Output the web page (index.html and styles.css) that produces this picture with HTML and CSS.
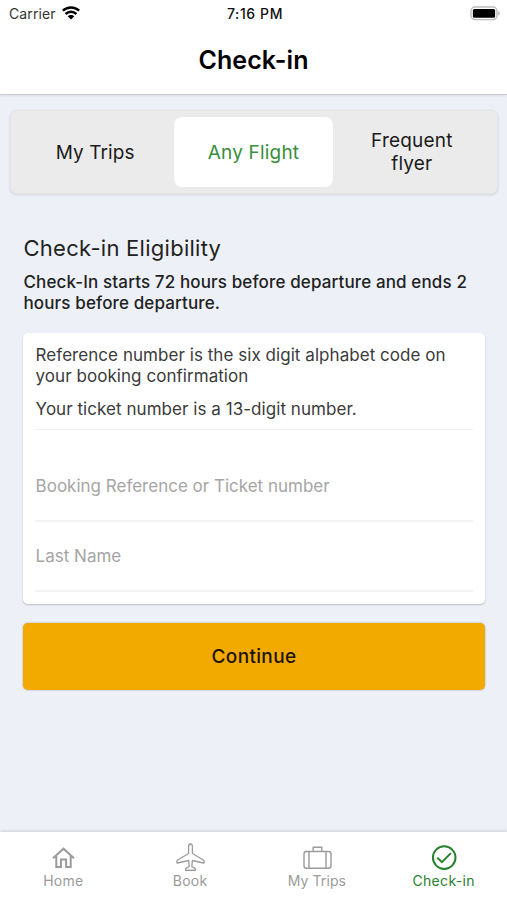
FILE: index.html
```html
<!DOCTYPE html>
<html lang="en">
<head>
<meta charset="utf-8">
<meta name="viewport" content="width=device-width, initial-scale=1">
<title>Check-in</title>
<link rel="stylesheet" href="styles.css">
</head>
<body>
<div class="app">
  <header class="header">
    <div class="status">
      <div class="carrier"><span>Carrier</span>
        <svg class="wifi" width="18" height="14" viewBox="0 0 18 14"><g fill="none" stroke="#000" stroke-width="2.500"><path d="M.8 4.700C5.400.3 12.600.3 17.200 4.700"/><path d="M3.600 8c3-2.900 7.800-2.900 10.800 0"/></g><path d="M5.700 10.300c1.800-1.800 4.800-1.800 6.600 0L9 13.500z"/></svg>
      </div>
      <div class="time">7:16 PM</div>
      <svg class="battery" width="31" height="15" viewBox="0 0 31 15"><rect x="1" y="1" width="26" height="12.600" rx="4" fill="#fff" stroke="#bdbdbd" stroke-width="1.400"/><rect x="2.900" y="2.900" width="22.200" height="8.800" rx="1.500"/><path d="M28.300 5v4.600c2-.6 2-4 0-4.600z" fill="#bbb"/></svg>
    </div>
    <h1 class="title">Check-in</h1>
  </header>
  <main class="content">
    <div class="tabs">
      <div class="tab">My Trips</div>
      <div class="tab tab-active">Any Flight</div>
      <div class="tab">Frequent<br>flyer</div>
    </div>
    <section class="eligibility">
      <h2 class="heading">Check-in Eligibility</h2>
      <p class="note">Check-In starts 72 hours before departure and ends 2<br>hours before departure.</p>
      <div class="card">
        <div class="info">
          <p>Reference number is the six digit alphabet code on<br>your booking confirmation</p>
          <p>Your ticket number is a 13-digit number.</p>
        </div>
        <div class="field field-ref">Booking Reference or Ticket number</div>
        <div class="field field-name">Last Name</div>
      </div>
      <button class="continue">Continue</button>
    </section>
  </main>
  <nav class="nav">
    <div class="item">
      <svg class="icon" width="30" height="30" viewBox="0 0 30 30" fill="none" stroke="currentColor" stroke-width="2"><path d="M5 16.300 15.500 6.700 26 16.300M8.300 14v11h4.600v-7.600h5.200V25h4.600V14"/></svg>
      <span class="label label-home">Home</span>
    </div>
    <div class="item">
      <svg class="icon" width="30" height="30" viewBox="0 0 30 30" fill="none" stroke="currentColor" stroke-width="1.300" stroke-linejoin="round"><path d="M15.500 2c-1.300 0-1.900 1.100-1.900 2.500v7L2.700 18c-1 .8-1.300 3.300-.2 3l11.100-2.500.6 6-2.900 1.600c-.9.500-1 2.500-.2 2.400.8-.2 1.600-.4 2.400-.4l2 .4 2-.4c.8 0 1.600.2 2.400.4.800.1.700-1.900-.2-2.400l-2.900-1.600.6-6L28.500 21c1.100.3.800-2.200-.2-3l-10.900-6.500v-7c0-1.400-.6-2.500-1.900-2.500z"/></svg>
      <span class="label label-book">Book</span>
    </div>
    <div class="item">
      <svg class="icon" width="30" height="30" viewBox="0 0 30 30" fill="none" stroke="currentColor" stroke-width="1.400"><rect x="2" y="9.500" width="27" height="16.800" rx="2.500"/><path d="M7 9.500v16.800M24 9.500v16.800M11.200 9.500V5.200h8.600v4.300"/></svg>
      <span class="label label-trips">My Trips</span>
    </div>
    <div class="item item-active">
      <svg class="icon" width="30" height="30" viewBox="0 0 30 30" fill="none" stroke="currentColor" stroke-width="2"><circle cx="15.200" cy="15.600" r="11.300"/><path d="m8.300 15.600 4.600 4.600 9-9.100"/></svg>
      <span class="label label-check">Check-in</span>
    </div>
  </nav>
</div>
</body>
</html>
```
FILE: styles.css
```css
* { box-sizing: border-box; }
body { margin: 0; font-family: Inter, "Liberation Sans", sans-serif; color: #222; }
h1, h2, p { margin: 0; }
.app { height: 900px; display: flex; flex-direction: column; background: #edf1f7; overflow: hidden; }
.header { height: 95px; background: #fff; border-bottom: 1px solid #c8c9cb; box-shadow: 0 1px 2px rgba(0,0,0,.08); }
.status { height: 27px; display: grid; grid-template-columns: 1fr auto 1fr; align-items: center; padding: 0 6px 0 9px; color: #111; }
.carrier { display: flex; align-items: center; gap: 6px; font-size: 14px; letter-spacing: .1px; color: #333; }
.wifi { margin-bottom: 1px; }
.time { font-size: 14px; font-weight: 500; letter-spacing: .6px; }
.battery { justify-self: end; margin-bottom: 1px; }
.title { text-align: center; font-size: 25px; line-height: 30px; font-weight: 600; letter-spacing: .1px; margin-top: 18px; color: #000; }
.content { flex: 1; padding: 15px 9px 0 10px; }
.tabs { height: 84px; padding: 6px 6px 6px 5px; display: grid; grid-template-columns: repeat(3, 1fr); background: #ebebeb; border: 1px solid #e4e5e8; border-radius: 7px; box-shadow: 0 1px 3px rgba(0,0,0,.12); }
.tab { display: flex; align-items: center; justify-content: center; text-align: center; font-size: 19px; line-height: 23px; letter-spacing: .2px; color: #1b1b1b; border-radius: 8px; }
.tab:first-child { letter-spacing: .1px; }
.tab-active { background: #fff; color: #388e3c; }
.eligibility { padding: 39px 13px 0; }
.heading { font-size: 22px; line-height: 30px; font-weight: 400; letter-spacing: .27px; padding-left: .5px; }
.note { margin-top: 9px; padding-left: .5px; font-size: 17px; line-height: 21px; font-weight: 500; letter-spacing: .13px; white-space: nowrap; }
.card { height: 271px; margin-top: 19px; padding: 12px 12px 0; background: #fff; border-radius: 5px; box-shadow: 0 1px 2px rgba(0,0,0,.22); color: #3b3b3b; }
.info { height: 85px; display: flex; flex-direction: column; gap: 12px; border-bottom: 1px solid #f0f0f0; padding-left: .6px; font-size: 17px; line-height: 21px; letter-spacing: .05px; white-space: nowrap; }
.field { border-bottom: 2px solid #f3f3f3; padding-left: .6px; font-size: 17px; line-height: 21px; color: #a5a5a5; }
.field-ref { height: 92px; padding-top: 46px; }
.field-name { height: 70px; padding-top: 24px; }
.continue { display: block; width: 100%; height: 67px; margin-top: 19px; padding: 0; border: 0; border-radius: 5px; background: #f2aa00; box-shadow: 0 0 2px rgba(0,0,0,.35); font: 500 19px/24px Inter, "Liberation Sans", sans-serif; letter-spacing: .35px; color: #1b1403; }
.nav { height: 68px; display: grid; grid-template-columns: repeat(4, 1fr); background: #fff; box-shadow: 0 -1px 3px rgba(0,0,0,.14); }
.item { display: flex; flex-direction: column; align-items: center; padding-top: 10px; color: #9b9b9b; }
.item-active { color: #27802d; }
.icon { display: block; flex: none; }
.label { font-size: 14px; line-height: 18px; letter-spacing: .1px; white-space: nowrap; }
.label-home { letter-spacing: .3px; }
.label-book { letter-spacing: .3px; line-height: 17px; }
.label-check { letter-spacing: .3px; }
```
